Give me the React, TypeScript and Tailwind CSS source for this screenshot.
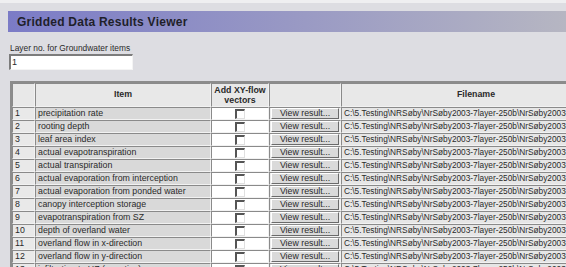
import React from 'react';

const rows: string[] = [
  'precipitation rate',
  'rooting depth',
  'leaf area index',
  'actual evapotranspiration',
  'actual transpiration',
  'actual evaporation from interception',
  'actual evaporation from ponded water',
  'canopy interception storage',
  'evapotranspiration from SZ',
  'depth of overland water',
  'overland flow in x-direction',
  'overland flow in y-direction',
  'infiltration to UZ (negative)',
  'exchange between UZ and SZ',
];

const path = 'C:\\5.Testing\\NRSøby\\NrSøby2003-7layer-250b\\NrSøby2003-7layer-250b.she';

// inset cell border: dark top/left, light bottom/right
const cell = 'border-t border-l border-b border-r border-t-[#8a8a8a] border-l-[#8a8a8a] border-b-[#f2f2f2] border-r-[#f2f2f2]';

export default function App() {
  return (
    <div className="w-[566px] h-[267px] overflow-hidden bg-[#dddde2] text-[#2a2a2a] font-['Liberation_Sans',Arial,sans-serif]">
      <div className="h-[3px] bg-[#efeff1]" />

      {/* Title bar */}
      <div className="mt-[8px] ml-[8px] h-[21px] flex items-center pl-[9px] bg-gradient-to-r from-[#7b7bc6] via-[#9898c4] to-[#b6b6c2]">
        <span className="text-[12px] font-bold tracking-[0.25px] text-[#1f1f2a]">Gridded Data Results Viewer</span>
      </div>

      {/* Layer input */}
      <div className="pl-[10px] mt-[11px] text-[8.4px] leading-[10px]">Layer no. for Groundwater items</div>
      <div className="ml-[9px] mt-[1px] w-[124px] h-[16px] bg-white border-t-2 border-l-2 border-b border-r border-t-[#7c7c7c] border-l-[#7c7c7c] border-b-[#f4f4f4] border-r-[#f4f4f4] flex items-center pl-[1px] text-[9px]">
        1
      </div>

      {/* Results table */}
      <div className="mt-[11px] ml-[10px] w-[602px] border-t-2 border-l-2 border-[#8c8c8c]">
        <div className="grid grid-cols-[23px_176px_58px_72px_270px] text-[8.8px]">
          <div className={`${cell} h-[24px] bg-[#e8e8e8]`} />
          <div className={`${cell} h-[24px] bg-[#e8e8e8] flex items-center justify-center font-bold`}>Item</div>
          <div className={`${cell} h-[24px] bg-[#e8e8e8] flex items-center justify-center text-center font-bold leading-[10px]`}>
            Add XY-flow<br />vectors
          </div>
          <div className={`${cell} h-[24px] bg-[#e8e8e8]`} />
          <div className={`${cell} h-[24px] bg-[#e8e8e8] flex items-center justify-center font-bold`}>Filename</div>

          {rows.map((name, i) => (
            <React.Fragment key={i}>
              <div className={`${cell} h-[13px] bg-[#e9e9e9] pl-[2px] leading-[11px]`}>{i + 1}</div>
              <div className={`${cell} h-[13px] bg-[#d9d9d9] pl-[2px] leading-[11px] whitespace-nowrap overflow-hidden`}>{name}</div>
              <div className={`${cell} h-[13px] bg-white flex justify-center pt-[1px]`}>
                <span className="block w-[10px] h-[10px] bg-white border-t-2 border-l-2 border-t-[#555] border-l-[#555] border-b border-r border-b-[#e0e0e0] border-r-[#e0e0e0]" />
              </div>
              <div className={`${cell} h-[13px] bg-[#eeeeee] px-[1px]`}>
                <div className="h-[11px] bg-[#dadada] border-t border-l border-t-white border-l-white border-b border-r border-b-[#6a6a6a] border-r-[#6a6a6a] flex items-center justify-center leading-[9px] whitespace-nowrap">
                  View result...
                </div>
              </div>
              <div className={`${cell} h-[13px] bg-[#e6e6e6] pl-[2px] leading-[11px] text-[8.3px] whitespace-nowrap overflow-hidden`}>{path}</div>
            </React.Fragment>
          ))}
        </div>
      </div>
    </div>
  );
}
